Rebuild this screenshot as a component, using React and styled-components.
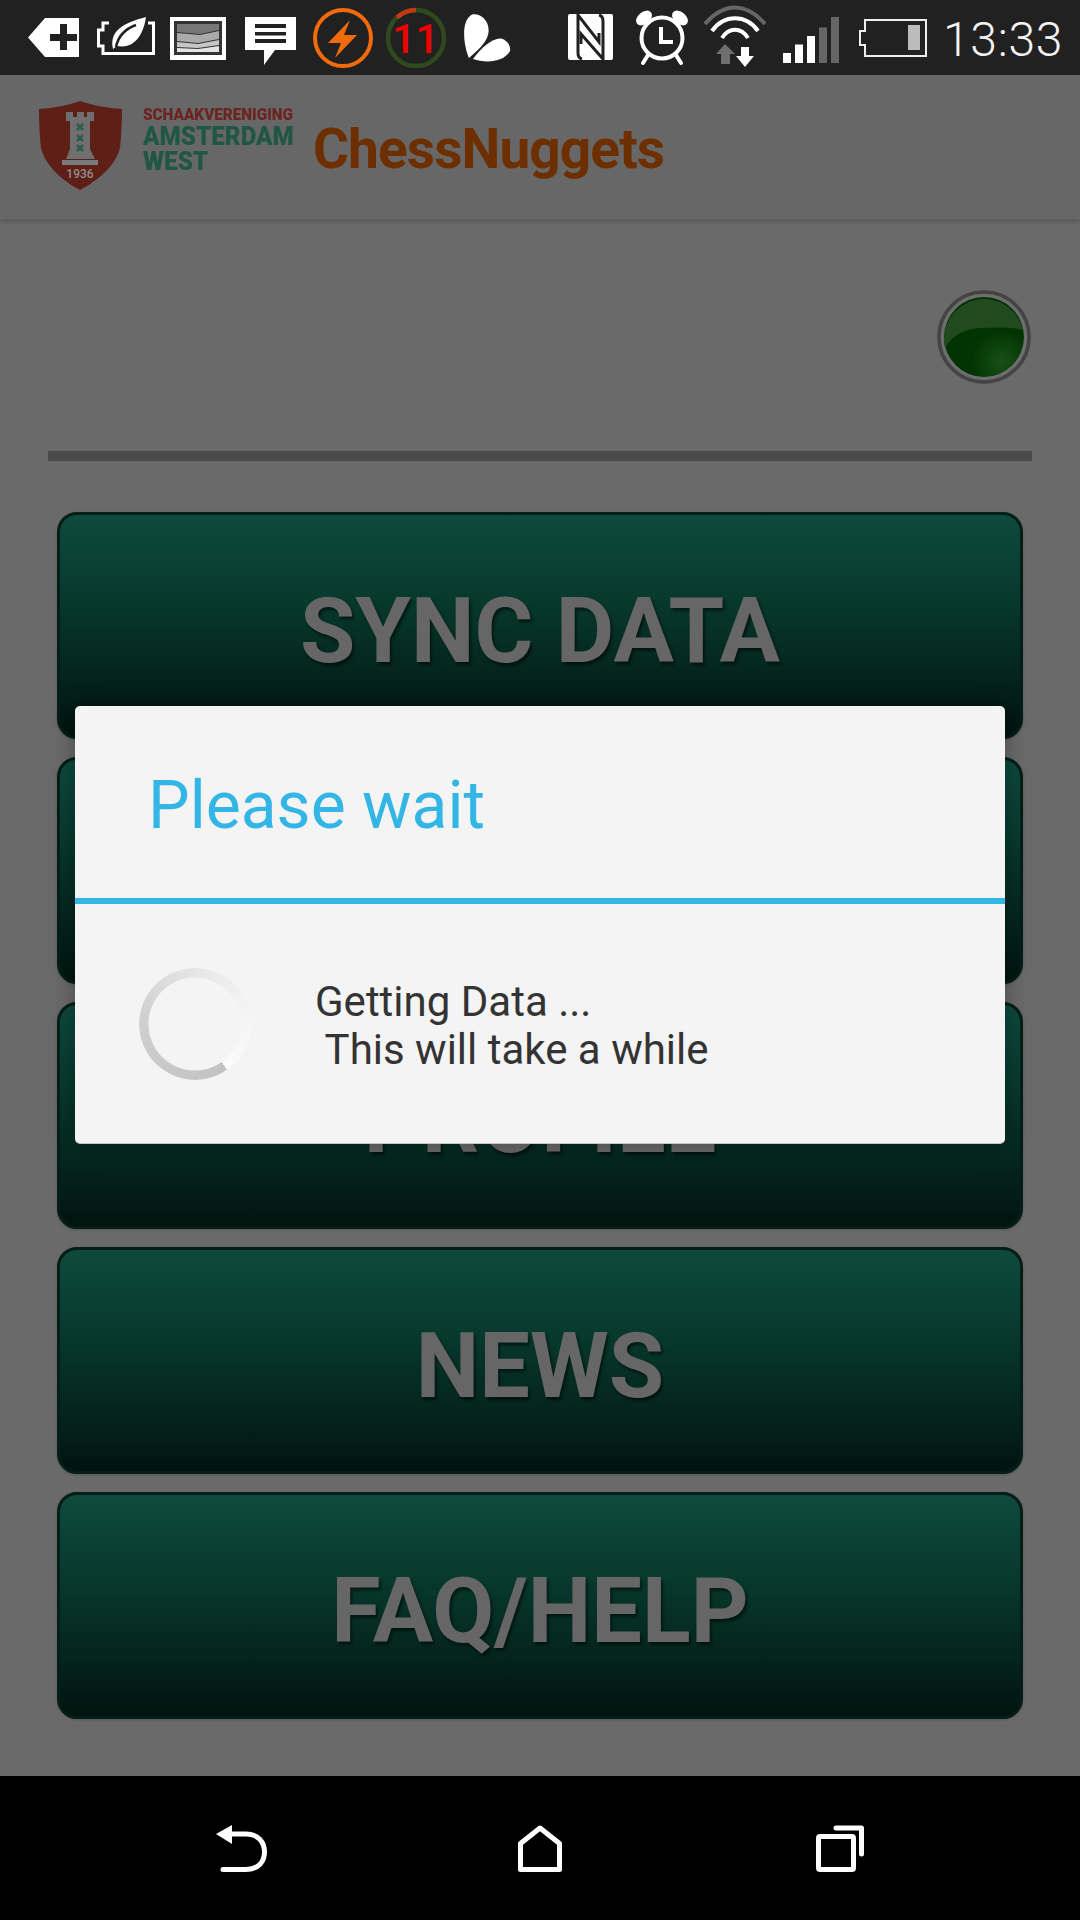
import React from 'react';
import styled, { createGlobalStyle } from 'styled-components';

const GlobalStyles = createGlobalStyle`
  html, body {
    margin: 0;
    padding: 0;
    background: #6a6a6a;
    font-family: 'Roboto', 'Liberation Sans', sans-serif;
  }
`;

const Screen = styled.div`
  position: relative;
  width: 1080px;
  height: 1920px;
  display: flex;
  flex-direction: column;
  overflow: hidden;
  background: #6a6a6a;
`;

const StatusBar = styled.div`
  height: 75px;
  flex: none;
  display: flex;
  align-items: flex-start;
  background: #212121;
`;

const StatusIcon = styled.svg`
  height: 75px;
  flex: none;
  margin: -1px 0 0 ${(props) => props.$left}px;
`;

const Clock = styled.div`
  margin-left: 16px;
  line-height: 79px;
  font-size: 48px;
  font-weight: 300;
  letter-spacing: 0.7px;
  color: #f4f4f4;
`;

const ActionBar = styled.div`
  height: 144px;
  flex: none;
  display: flex;
  align-items: center;
  padding-left: 39px;
  background: #676767;
  box-shadow: 0 3px 4px rgba(0, 0, 0, 0.14);
`;

const LogoWords = styled.div`
  display: flex;
  flex-direction: column;
  margin-left: 21px;
  margin-top: -16px;
  width: 151px;
`;

const LogoLine = styled.div`
  font-weight: 900;
  font-size: ${(props) => props.$size}px;
  line-height: ${(props) => props.$height}px;
  color: ${(props) => props.$color};
  transform: scaleX(${(props) => props.$squeeze});
  transform-origin: left center;
  white-space: nowrap;
`;

const AppTitle = styled.div`
  margin: 4px 0 0 19px;
  font-size: 55px;
  font-weight: 700;
  letter-spacing: -0.9px;
  color: #6e2f00;
`;

const Content = styled.div`
  flex: 1;
  display: flex;
  flex-direction: column;
`;

const LedRow = styled.div`
  height: 232px;
  flex: none;
  display: flex;
  justify-content: flex-end;
  align-items: flex-start;
  padding: 71px 49px 0 0;
  box-sizing: border-box;
`;

const Divider = styled.div`
  height: 10px;
  margin: 0 48px;
  background: #4b4b4b;
`;

const ButtonList = styled.div`
  display: flex;
  flex-direction: column;
  gap: 18px;
  margin: 51px 57px 0;
`;

const MenuButton = styled.div`
  height: 227px;
  box-sizing: border-box;
  display: flex;
  align-items: center;
  justify-content: center;
  padding-top: 12px;
  border: 3px solid #031d17;
  border-radius: 20px;
  background: linear-gradient(#0e4a3d 0%, #07382c 40%, #02140f 100%);
  box-shadow: 0 1px 3px rgba(0, 0, 0, 0.18);
  font-size: 90px;
  font-weight: 700;
  color: #666666;
  text-shadow: 2px 3px 3px rgba(0, 0, 0, 0.5);
`;

const NavBar = styled.div`
  height: 144px;
  flex: none;
  box-sizing: border-box;
  display: flex;
  align-items: center;
  padding-left: 216px;
  background: #000000;
`;

const NavIcon = styled.svg`
  height: 47px;
  flex: none;
  margin-right: ${(props) => props.$right}px;
`;

const Dialog = styled.div`
  position: absolute;
  left: 75px;
  top: 706px;
  width: 930px;
  height: 437px;
  border-radius: 5px;
  background: #f4f4f5;
  box-shadow: 0 1px 0 #c4c4c4, 0 0 24px rgba(0, 0, 0, 0.3);
  display: flex;
  flex-direction: column;
`;

const DialogTitle = styled.div`
  height: 192px;
  box-sizing: border-box;
  flex: none;
  display: flex;
  align-items: center;
  padding: 7px 0 0 73px;
  font-size: 66px;
  color: #33b5e5;
`;

const DialogRule = styled.div`
  height: 6px;
  flex: none;
  background: #33b5e5;
`;

const DialogBody = styled.div`
  flex: 1;
  display: flex;
  align-items: center;
  padding-left: 64px;
`;

const Spinner = styled.div`
  width: 112px;
  height: 112px;
  flex: none;
  border-radius: 50%;
  background: conic-gradient(from 145deg, #c2c2c2 0deg, #cfcfcf 130deg, #e6e6e6 215deg, #f4f4f4 290deg, #fbfbfb 359deg);
  mask: radial-gradient(circle, transparent 46px, #000 47px);
`;

const Message = styled.div`
  margin: 5px 0 0 64px;
  font-size: 42px;
  line-height: 48px;
  color: #333333;
  white-space: pre;
`;

const ShieldIcon = styled.svg`
  width: 83px;
  height: 90px;
  flex: none;
  margin-top: -2px;
`;

const LedIcon = styled.svg`
  width: 94px;
  height: 94px;
`;

const App = () => (
  <Screen>
    <GlobalStyles />
    <StatusBar>
      <StatusIcon $left={28} width="51" viewBox="0 0 51 75">
        <path d="M0 38.5 L17 19 H51 V58 H17 Z" fill="#fff" />
        <path d="M22 35 H32 V25 H39 V35 H49 V42 H39 V51 H32 V42 H22 Z" fill="#212121" />
      </StatusIcon>
      <StatusIcon $left={18} width="58" viewBox="0 0 58 75">
        <path d="M12 24 H6 V31 H1.5 V47 H6 V54.5 H56.5 V24 H51" fill="none" stroke="#fff" strokeWidth="3" />
        <path d="M16 50 C12 32 26 24 49 18 C46 38 36 50 20 47 Z" fill="#fff" />
        <path d="M19 48 C21 38 28 30 39 26" fill="none" stroke="#212121" strokeWidth="2.5" />
      </StatusIcon>
      <StatusIcon $left={15} width="56" viewBox="0 0 56 75">
        <rect x="0" y="18" width="56" height="43" fill="#fff" />
        <rect x="4" y="22" width="48" height="34" fill="#333" />
        <path d="M7 25 H49 V31 L30 35 L7 33 Z" fill="#777" />
        <path d="M7 34 L30 36 L49 32 V40 L28 44 L7 42 Z" fill="#aaa" />
        <path d="M7 43 L28 45 L49 41 V46 L28 49 L7 48 Z" fill="#c6c6c6" />
        <path d="M7 49 L28 50 L49 47 V53 H7 Z" fill="#e4e4e4" />
      </StatusIcon>
      <StatusIcon $left={19} width="51" viewBox="0 0 51 75">
        <path d="M0 18 H51 V51 H30 L19 66 V51 H0 Z" fill="#fff" />
        <path d="M10 25 H41 V29 H10 Z M10 33 H41 V36.5 H10 Z M10 40 H41 V44 H10 Z" fill="#212121" />
      </StatusIcon>
      <StatusIcon $left={17} width="60" viewBox="0 0 60 75">
        <circle cx="30" cy="39" r="28" fill="none" stroke="#f26a0a" strokeWidth="4" />
        <path d="M37 21 L15 44 H28 L22 59 L44 36 H31 Z" fill="#f26a0a" />
      </StatusIcon>
      <StatusIcon $left={13} width="60" viewBox="0 0 60 75">
        <circle cx="30" cy="39" r="28" fill="none" stroke="#2f4a1d" strokeWidth="4.5" />
        <path d="M11 18.5 A28 28 0 0 1 30 11" fill="none" stroke="#c23a10" strokeWidth="4.5" />
        <text x="29.5" y="53.5" textAnchor="middle" fontFamily="Roboto, sans-serif" fontSize="41" fontWeight="500" fill="#f00000">11</text>
      </StatusIcon>
      <StatusIcon $left={17} width="48" viewBox="0 0 48 75">
        <path d="M9 15.5 C20 14 28 25 25 36 C23 44 14 52 6 59 C1 48 -3 22 9 15.5 Z" fill="#fff" />
        <path d="M10 60 C18 49 29 39 38 39.5 C44 41 48 47 47 52 C40 64 22 64 10 60 Z" fill="#fff" />
      </StatusIcon>
      <StatusIcon $left={57} width="45" viewBox="0 0 45 75">
        <rect x="0" y="15" width="45" height="46" rx="2" fill="#fff" />
        <path d="M14 60 Q10 59 10 54 V16 L31 43 V34" fill="none" stroke="#212121" strokeWidth="3" />
        <path d="M31 16 Q35 17 35 22 V60 L13 35 V45" fill="none" stroke="#212121" strokeWidth="3" />
      </StatusIcon>
      <StatusIcon $left={22} width="55" viewBox="0 0 55 75">
        <circle cx="27" cy="39" r="20.5" fill="none" stroke="#fff" strokeWidth="4" />
        <path d="M26 28 V43 H38" fill="none" stroke="#fff" strokeWidth="4" />
        <ellipse cx="9" cy="19" rx="9" ry="6" transform="rotate(-40 9 19)" fill="#fff" />
        <ellipse cx="45" cy="19" rx="9" ry="6" transform="rotate(40 45 19)" fill="#fff" />
        <path d="M13 56 L8 64 M41 56 L46 64" stroke="#fff" strokeWidth="4" strokeLinecap="round" />
      </StatusIcon>
      <StatusIcon $left={14} width="62" viewBox="0 0 62 75">
        <path d="M1 25 C20 3 42 3 61 25" fill="none" stroke="#666" strokeWidth="4" />
        <path d="M8 32 C20 15 42 15 54 32" fill="none" stroke="#fff" strokeWidth="4" />
        <path d="M18 39 C25 28 37 28 44 39" fill="none" stroke="#fff" strokeWidth="4" />
        <path d="M21 45 L31 55 H26 V65 H17 V55 H12 Z" fill="#6e6e6e" />
        <path d="M37 48 H45 V57 H50 L41 68 L32 57 H37 Z" fill="#fff" />
      </StatusIcon>
      <StatusIcon $left={17} width="56" viewBox="0 0 56 75">
        <rect x="0" y="54" width="8" height="10" fill="#fff" />
        <rect x="12" y="45.5" width="8" height="18.5" fill="#fff" />
        <rect x="24" y="37" width="8" height="27" fill="#fff" />
        <rect x="36" y="28.5" width="8" height="35.5" fill="#666" />
        <rect x="48" y="18" width="8" height="46" fill="#666" />
      </StatusIcon>
      <StatusIcon $left={20} width="68" viewBox="0 0 68 75">
        <path d="M6 21 H67 V57 H6 V46 H1 V32 H6 Z" fill="none" stroke="#eee" strokeWidth="2" />
        <rect x="49" y="26" width="12" height="25" fill="#bcbcbc" />
      </StatusIcon>
      <Clock>13:33</Clock>
    </StatusBar>

    <ActionBar>
      <ShieldIcon viewBox="0 0 83 90">
        <path d="M0 8 C16 7 30 4 41 0 C53 4 67 7 83 8 C83 22 82 38 81 47 C76 66 58 80 41 89 C24 80 7 66 2 47 C1 38 0 22 0 8 Z" fill="#5e1f16" />
        <path d="M27 11 H34 V16 H38 V11 H45 V16 H48 V11 H55 V20 H51 V48 L56 58 H27 L31 48 V20 H27 Z" fill="#6f6f6f" />
        <rect x="23" y="59" width="36" height="5" fill="#7a7a7a" />
        <path d="M38 23 L44 29 M44 23 L38 29 M38 34 L44 40 M44 34 L38 40 M38 44 L44 50 M44 44 L38 50" stroke="#2f5a4c" strokeWidth="2.6" />
        <text x="41" y="77" textAnchor="middle" fontFamily="Roboto, sans-serif" fontSize="12" fontWeight="500" fill="#8f8f8f">1936</text>
      </ShieldIcon>
      <LogoWords>
        <LogoLine $size={17} $height={19} $color="#6c2420" $squeeze={0.9}>SCHAAKVERENIGING</LogoLine>
        <LogoLine $size={25} $height={25} $color="#1f5646" $squeeze={0.97}>AMSTERDAM</LogoLine>
        <LogoLine $size={25} $height={25} $color="#1f5646" $squeeze={0.97}>WEST</LogoLine>
      </LogoWords>
      <AppTitle>ChessNuggets</AppTitle>
    </ActionBar>

    <Content>
      <LedRow>
        <LedIcon viewBox="0 0 94 94">
          <defs>
            <radialGradient id="ledGlow" cx="0.72" cy="0.8" r="0.38">
              <stop offset="0" stopColor="#185018" />
              <stop offset="1" stopColor="#023402" />
            </radialGradient>
          </defs>
          <circle cx="47" cy="47" r="45" fill="#6e6e6e" stroke="#444" strokeWidth="3.5" />
          <circle cx="47" cy="47" r="40" fill="url(#ledGlow)" />
          <path d="M8 58 C14 46 28 38 45 38 C60 37 76 37 86 40 A40 40 0 1 0 8 58 Z" fill="#214a21" />
        </LedIcon>
      </LedRow>
      <Divider />
      <ButtonList>
        <MenuButton>SYNC DATA</MenuButton>
        <MenuButton />
        <MenuButton>PROFILE</MenuButton>
        <MenuButton>NEWS</MenuButton>
        <MenuButton>FAQ/HELP</MenuButton>
      </ButtonList>
    </Content>

    <NavBar>
      <NavIcon $right={251} width="51" viewBox="0 0 51 47">
        <path d="M0 9 L16 0 V19 Z" fill="#fff" />
        <path d="M14 9 H30 C42 9 48.5 17 48.5 27 C48.5 37 42 44.5 30 44.5 H7" fill="none" stroke="#fff" strokeWidth="5" strokeLinecap="round" />
      </NavIcon>
      <NavIcon $right={254} width="44" viewBox="0 0 44 47">
        <path d="M22 3 L41.5 18.5 V44.5 H2.5 V18.5 Z" fill="none" stroke="#fff" strokeWidth="5" strokeLinejoin="round" />
      </NavIcon>
      <NavIcon width="48" viewBox="0 0 48 47">
        <rect x="2.5" y="11.5" width="35" height="33" rx="1.5" fill="none" stroke="#fff" strokeWidth="5" />
        <path d="M20 3 H45.5 V29" fill="none" stroke="#fff" strokeWidth="5" strokeLinecap="round" strokeLinejoin="round" />
      </NavIcon>
    </NavBar>

    <Dialog>
      <DialogTitle>Please wait</DialogTitle>
      <DialogRule />
      <DialogBody>
        <Spinner />
        <Message>{'Getting Data ...\n This will take a while'}</Message>
      </DialogBody>
    </Dialog>
  </Screen>
);

export default App;
